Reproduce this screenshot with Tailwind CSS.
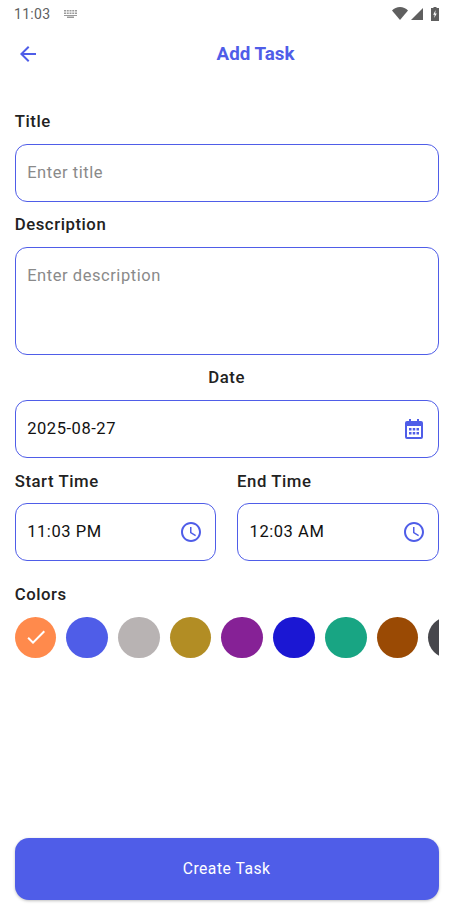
<!DOCTYPE html>
<html lang="en">
<head>
    <meta charset="UTF-8">
    <meta name="viewport" content="width=device-width,initial-scale=1.0">
    <script src="https://cdn.jsdelivr.net/npm/@tailwindcss/browser@4"></script>
    <title>Add Task</title>
</head>
<body class="bg-white font-['Roboto',sans-serif]">
    <div class="w-[449px] h-[921px] flex flex-col overflow-hidden">
        <!-- status bar -->
        <div class="h-[27px] flex items-center justify-between pl-[14px] pr-[10px] text-[#5f5f5f]">
            <div class="flex items-center gap-[14px]">
                <span class="text-[14px] tracking-[0.3px] leading-none">11:03</span>
                <svg width="13" height="8" viewBox="0 0 13 8" fill="#9a9a9a"><path d="M0 0h2v1.500H0zM2.750 0h2v1.500h-2zM5.500 0h2v1.500h-2zM8.250 0h2v1.500h-2zM11 0h2v1.500h-2zM0 2.500h2V4H0zM2.750 2.500h2V4h-2zM5.500 2.500h2V4h-2zM8.250 2.500h2V4h-2zM11 2.500h2V4h-2zM0 5h13v1H0zM3 6.500h7V8H3z"/></svg>
            </div>
            <div class="flex items-center gap-[3px]">
                <svg width="16" height="13" viewBox="0 0 16 13" fill="#5f5f5f"><path d="M0 3.500C2 1.300 5 0 8 0s6 1.300 8 3.500L8 13z"/></svg>
                <svg width="12" height="12" viewBox="0 0 12 12" fill="#5f5f5f"><path d="M12 0v12H0z"/></svg>
                <svg class="ml-[5px]" width="8" height="14" viewBox="0 0 8 14"><path fill="#5f5f5f" d="M2.500 0h3v1H8v13H0V1h2.500z"/><path fill="#fff" d="M4.600 3 2.200 7.800h1.500L3.200 11l2.600-4.600H4.200z"/></svg>
            </div>
        </div>
        <!-- header -->
        <div class="h-[54px] relative flex items-center justify-center pl-[62px]">
            <svg class="absolute left-[16px] top-[15px]" width="24" height="24" viewBox="0 0 24 24" fill="#4f5de8"><path d="M20 11H7.830l5.590-5.590L12 4l-8 8 8 8 1.410-1.410L7.830 13H20z"/></svg>
            <h1 class="text-[18.800px] font-bold text-[#4f5de8] leading-none">Add Task</h1>
        </div>
        <!-- form -->
        <div class="flex-1 pl-[14.700px] w-[438.500px] flex flex-col">
            <label class="mt-[30px] text-[16.750px] font-medium text-[#222] leading-[20px] tracking-[0.55px]">Title</label>
            <div class="mt-[13px] h-[57.500px] border border-[#4f5de8] rounded-[12px] flex items-center pl-[11.500px] pr-[12px] pt-[1.500px] text-[16.500px] tracking-[0.55px] text-[#8a8a8a]">Enter title</div>
            <label class="mt-[12.500px] text-[16.750px] font-medium text-[#222] leading-[20px] tracking-[0.55px]">Description</label>
            <div class="mt-[13px] h-[107.500px] border border-[#4f5de8] rounded-[12px] pl-[11.500px] pr-[12px] pt-[18px] text-[16.500px] leading-[20px] tracking-[0.55px] text-[#8a8a8a]">Enter description</div>
            <label class="mt-[12.500px] text-center text-[16.750px] font-medium text-[#222] leading-[20px] tracking-[0.55px]">Date</label>
            <div class="mt-[13px] h-[57.500px] border border-[#4f5de8] rounded-[12px] flex items-center justify-between pl-[11.500px] pr-[12px] text-[16.500px] tracking-[0.55px] text-[#111]">
                <span class="pt-[1.500px]">2025-08-27</span>
                <svg width="24" height="24" viewBox="0 0 24 24" fill="#4f5de8"><path fill-rule="evenodd" d="M7 2h2v2h6V2h2v2h2a2 2 0 0 1 2 2v14a2 2 0 0 1-2 2H5a2 2 0 0 1-2-2V6a2 2 0 0 1 2-2h2zM5 9v11h14V9z"/><path d="M7 11h2.500v2.500H7zM10.750 11h2.500v2.500h-2.500zM14.500 11H17v2.500h-2.500zM7 15h2.500v2.500H7zM10.750 15h2.500v2.500h-2.500zM14.500 15H17v2.500h-2.500z"/></svg>
            </div>
            <div class="mt-[13px] flex gap-[21px]">
                <div class="flex-1 flex flex-col">
                    <label class="text-[16.750px] font-medium text-[#222] leading-[20px] tracking-[0.55px]">Start Time</label>
                    <div class="mt-[12.500px] h-[57.500px] border border-[#4f5de8] rounded-[12px] flex items-center justify-between pl-[11.500px] pr-[12px] text-[16.500px] tracking-[0.55px] text-[#111]">
                        <span class="pt-[1.500px]">11:03 PM</span>
                        <svg width="24" height="24" viewBox="0 0 24 24" fill="#4f5de8"><path d="M11.990 2C6.470 2 2 6.480 2 12s4.470 10 9.990 10C17.520 22 22 17.520 22 12S17.520 2 11.990 2zM12 20c-4.420 0-8-3.580-8-8s3.580-8 8-8 8 3.580 8 8-3.580 8-8 8z"/><path d="M12.500 7H11v6l5.250 3.150.75-1.230-4.500-2.670z"/></svg>
                    </div>
                </div>
                <div class="flex-1 flex flex-col">
                    <label class="text-[16.750px] font-medium text-[#222] leading-[20px] tracking-[0.55px]">End Time</label>
                    <div class="mt-[12.500px] h-[57.500px] border border-[#4f5de8] rounded-[12px] flex items-center justify-between pl-[11.500px] pr-[12px] text-[16.500px] tracking-[0.55px] text-[#111]">
                        <span class="pt-[1.500px]">12:03 AM</span>
                        <svg width="24" height="24" viewBox="0 0 24 24" fill="#4f5de8"><path d="M11.990 2C6.470 2 2 6.480 2 12s4.470 10 9.990 10C17.520 22 22 17.520 22 12S17.520 2 11.990 2zM12 20c-4.420 0-8-3.580-8-8s3.580-8 8-8 8 3.580 8 8-3.580 8-8 8z"/><path d="M12.500 7H11v6l5.250 3.150.75-1.230-4.500-2.670z"/></svg>
                    </div>
                </div>
            </div>
            <label class="mt-[23px] text-[16.750px] font-medium text-[#222] leading-[20px] tracking-[0.55px]">Colors</label>
            <div class="mt-[13px] flex gap-[10px] overflow-hidden">
                <div class="w-[41.700px] h-[41.700px] shrink-0 rounded-full bg-[#ff8a4c] flex items-center justify-center">
                    <svg width="24" height="24" viewBox="0 0 24 24" fill="#fff"><path d="M9 16.170 4.830 12l-1.420 1.410L9 19 21 7l-1.410-1.410z"/></svg>
                </div>
                <div class="w-[41.700px] h-[41.700px] shrink-0 rounded-full bg-[#4f5de8]"></div>
                <div class="w-[41.700px] h-[41.700px] shrink-0 rounded-full bg-[#b8b3b3]"></div>
                <div class="w-[41.700px] h-[41.700px] shrink-0 rounded-full bg-[#b28d24]"></div>
                <div class="w-[41.700px] h-[41.700px] shrink-0 rounded-full bg-[#862196]"></div>
                <div class="w-[41.700px] h-[41.700px] shrink-0 rounded-full bg-[#1b17d3]"></div>
                <div class="w-[41.700px] h-[41.700px] shrink-0 rounded-full bg-[#18a583]"></div>
                <div class="w-[41.700px] h-[41.700px] shrink-0 rounded-full bg-[#9a4a04]"></div>
                <div class="w-[41.700px] h-[41.700px] shrink-0 rounded-full bg-[#47474c]"></div>
            </div>
            <button class="mt-auto mb-[21px] h-[62px] rounded-[14px] bg-[#4f5de8] shadow-[0_1px_3px_rgba(0,0,0,0.25)] text-white text-[15.700px] tracking-[0.5px]">Create Task</button>
        </div>
    </div>
</body>
</html>
